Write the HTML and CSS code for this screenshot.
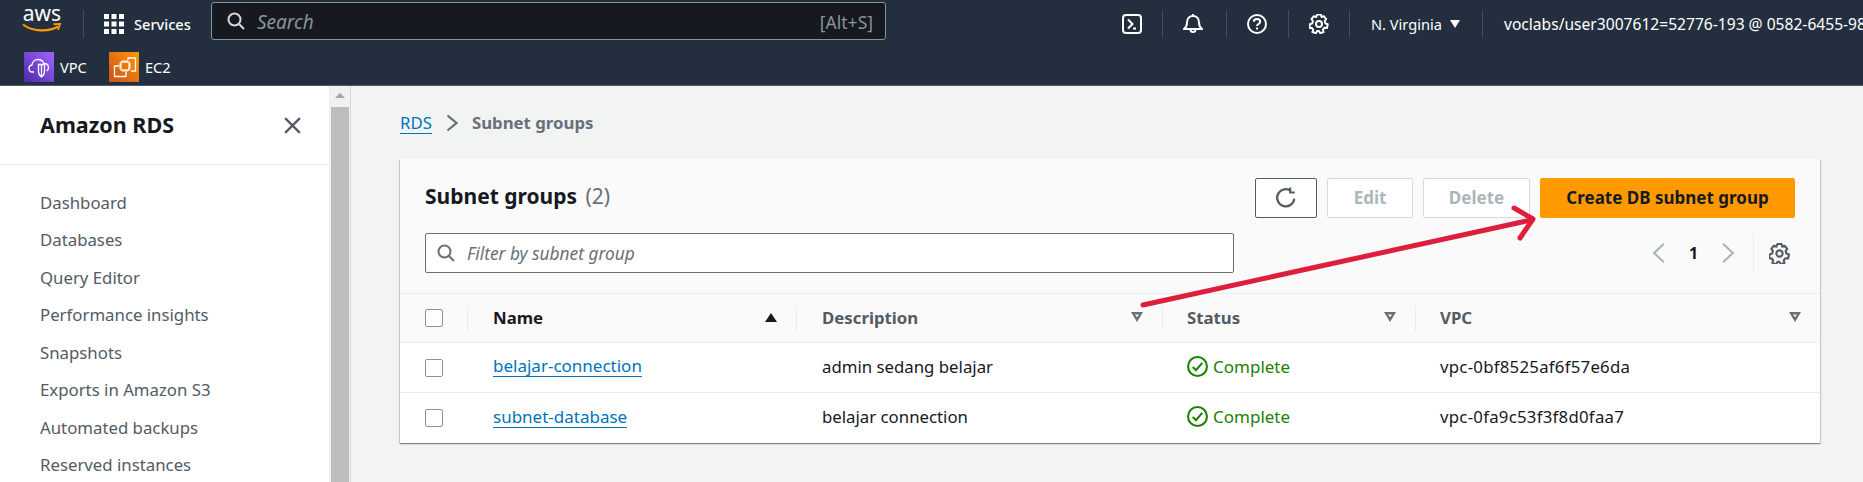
FILE: index.html
```html
<!DOCTYPE html>
<html lang="en">
<head>
    <meta charset="UTF-8">
    <meta name="viewport" content="width=device-width, initial-scale=1.0">
    <title>Subnet groups | RDS</title>
    <link rel="stylesheet" href="styles.css">
</head>
<body>

<header class="topnav">
    <div class="nav-row">
        <a class="aws-logo">
            <span class="aws-word">aws</span>
            <svg class="aws-smile" width="40" height="12" viewBox="0 0 40 12">
                <path d="M1 2.500C10 9.500 26 10.500 36 4.500" fill="none" stroke="#ff9900" stroke-width="2.200"/>
                <path d="M31.500 2.200L38 2L36 8" fill="none" stroke="#ff9900" stroke-width="1.800"/>
            </svg>
        </a>
        <span class="nav-sep sep-logo"></span>
        <svg class="grid-icon" width="20" height="20" viewBox="0 0 20 20" fill="#fff">
            <rect x="0" y="0" width="5" height="5"/><rect x="7.500" y="0" width="5" height="5"/><rect x="15" y="0" width="5" height="5"/>
            <rect x="0" y="7.500" width="5" height="5"/><rect x="7.500" y="7.500" width="5" height="5"/><rect x="15" y="7.500" width="5" height="5"/>
            <rect x="0" y="15" width="5" height="5"/><rect x="7.500" y="15" width="5" height="5"/><rect x="15" y="15" width="5" height="5"/>
        </svg>
        <span class="nav-services">Services</span>
        <div class="top-search">
            <svg width="18" height="18" viewBox="0 0 18 18" fill="none" stroke="#d5dbdb" stroke-width="2">
                <circle cx="7.500" cy="7.500" r="6"/><path d="M12 12l5 5"/>
            </svg>
            <span class="top-search-text">Search</span>
            <span class="top-search-key">[Alt+S]</span>
        </div>
        <svg class="nav-icon icon-terminal" width="20" height="20" viewBox="0 0 20 20" fill="none" stroke="#fff" stroke-width="2">
            <rect x="1" y="1" width="18" height="18" rx="3"/><path d="M6 5.500l4.500 4.500L6 14.500M11 14.500h3"/>
        </svg>
        <span class="nav-sep sep-terminal"></span>
        <svg class="nav-icon icon-bell" width="20" height="22" viewBox="0 0 20 22" fill="none" stroke="#fff" stroke-width="2">
            <path d="M1 16c2-1.500 3-3 3-6.500C4 5.500 6.500 3 10 3s6 2.500 6 6.500c0 3.500 1 5 3 6.500zM10 1v2M7.500 16.500a2.500 2.500 0 0 0 5 0"/>
        </svg>
        <span class="nav-sep sep-bell"></span>
        <svg class="nav-icon icon-help" width="20" height="20" viewBox="0 0 20 20" fill="none" stroke="#fff" stroke-width="2">
            <circle cx="10" cy="10" r="9"/><path d="M6.800 7.800C6.800 6 8.200 5 10 5s3.200 1 3.200 2.700c0 2.300-3.200 2.300-3.200 4.300"/><path d="M10 13.500V15.500"/>
        </svg>
        <span class="nav-sep sep-help"></span>
        <svg class="nav-icon icon-gear" width="20" height="20" viewBox="0 0 20 20" fill="none" stroke="#fff" stroke-width="2">
            <path d="M8 1h4l.6 2.600 2.300-1 2.500 3-1.500 2 .6 2.400 2.500 1-.8 3.800-2.700-.2-1.500 2 .8 2.400-3.600 1.200-1.200-2.200h-2l-1.200 2.200-3.600-1.200.8-2.400-1.500-2-2.700.2L.6 11l2.500-1 .6-2.400-1.500-2 2.500-3 2.300 1z" stroke-linejoin="round" transform="translate(0.300 -0.400) scale(0.97)"/>
            <circle cx="10" cy="10" r="3"/>
        </svg>
        <span class="nav-sep sep-gear"></span>
        <span class="nav-region">N. Virginia</span>
        <span class="region-caret"></span>
        <span class="nav-sep sep-region"></span>
        <span class="nav-user">voclabs/user3007612=52776-193 @ 0582-6455-9866</span>
    </div>
    <div class="nav-row shortcuts">
        <svg class="tile" width="30" height="30" viewBox="0 0 30 30">
            <defs>
                <linearGradient id="vpcGrad" x1="0" y1="1" x2="1" y2="0">
                    <stop offset="0" stop-color="#4d27a8"/><stop offset="1" stop-color="#a166ff"/>
                </linearGradient>
            </defs>
            <rect width="30" height="30" fill="url(#vpcGrad)"/>
            <path d="M10 20H8.500C6 20 5 18 5 16.500c0-2 1.300-3.300 3-3.500C8.200 9.500 11 7.500 14 7.500c3 0 5 1.800 6 4 2.500 0 4.500 1.500 4.500 4.200 0 1.300-.6 2.500-1.800 3.200" fill="none" stroke="#fff" stroke-width="1.300"/>
            <path d="M14.500 12.500h6v7c0 3-1.500 4.500-3 5.500-1.500-1-3-2.500-3-5.500z" fill="none" stroke="#fff" stroke-width="1.300"/>
            <path d="M17.500 13v11" stroke="#fff" stroke-width="1.300"/>
        </svg>
        <span class="shortcut-label">VPC</span>
        <svg class="tile tile-ec2" width="30" height="30" viewBox="0 0 30 30">
            <defs>
                <linearGradient id="ec2Grad" x1="0" y1="1" x2="1" y2="0">
                    <stop offset="0" stop-color="#c8511b"/><stop offset="1" stop-color="#ff9900"/>
                </linearGradient>
            </defs>
            <rect width="30" height="30" fill="url(#ec2Grad)"/>
            <path d="M10 14H5.500v10.500H17V20" fill="none" stroke="#fff" stroke-width="1.300"/>
            <path d="M19 8V6h7.500v13H22" fill="none" stroke="#fff" stroke-width="1.300"/>
            <rect x="12" y="10" width="8" height="8" fill="none" stroke="#fff" stroke-width="1.300"/>
            <path d="M14 8v2M16 8v2M18 8v2M14 18v2M16 18v2M18 18v2M10 12h2M10 14h2M10 16h2M20 12h2M20 14h2M20 16h2" stroke="#fff" stroke-width="1"/>
        </svg>
        <span class="shortcut-label">EC2</span>
    </div>
</header>

<div class="layout">
    <aside class="sidebar">
        <div class="sidebar-head">
            <span class="sidebar-title">Amazon RDS</span>
            <svg width="19" height="19" viewBox="0 0 18 18" stroke="#545b64" stroke-width="2.200" fill="none">
                <path d="M2 2l14 14M16 2L2 16"/>
            </svg>
        </div>
        <nav class="side-links">
            <a>Dashboard</a>
            <a>Databases</a>
            <a>Query Editor</a>
            <a>Performance insights</a>
            <a>Snapshots</a>
            <a>Exports in Amazon S3</a>
            <a>Automated backups</a>
            <a>Reserved instances</a>
        </nav>
    </aside>
    <div class="scrollbar">
        <div class="scroll-arrow"></div>
        <div class="scroll-thumb"></div>
    </div>

    <main class="content">
        <div class="breadcrumb">
            <a class="crumb-link">RDS</a>
            <svg width="12" height="18" viewBox="0 0 12 18" fill="none" stroke="#687078" stroke-width="2.200"><path d="M1.500 1.500l9 7.500-9 7.500"/></svg>
            <span class="crumb-current">Subnet groups</span>
        </div>

        <section class="card">
            <div class="card-head">
                <div class="head-row">
                    <h1 class="card-title">Subnet groups <span class="count">(2)</span></h1>
                    <div class="actions">
                        <button class="btn btn-refresh">
                            <svg width="22" height="22" viewBox="0 0 20 20" fill="none" stroke="#545b64" stroke-width="2"><path d="M17.500 10.500A7.800 7.800 0 1 1 13.500 3M13.800 .5v4.500H18"/></svg>
                        </button>
                        <button class="btn btn-edit" disabled>Edit</button>
                        <button class="btn btn-delete" disabled>Delete</button>
                        <button class="btn btn-primary">Create DB subnet group</button>
                    </div>
                </div>
                <div class="head-row filter-row">
                    <div class="filter">
                        <svg width="18" height="18" viewBox="0 0 18 18" fill="none" stroke="#687078" stroke-width="2"><circle cx="7.500" cy="7.500" r="6"/><path d="M12 12l5 5"/></svg>
                        <span>Filter by subnet group</span>
                    </div>
                    <div class="pager">
                        <svg width="13" height="22" viewBox="0 0 12 20" fill="none" stroke="#aab7b8" stroke-width="2"><path d="M11 1.500L2 10l9 8.500"/></svg>
                        <span class="page-num">1</span>
                        <svg width="13" height="22" viewBox="0 0 12 20" fill="none" stroke="#aab7b8" stroke-width="2"><path d="M1 1.500L10 10l-9 8.500"/></svg>
                        <span class="pager-sep"></span>
                        <svg width="21" height="21" viewBox="0 0 20 20" fill="none" stroke="#545b64" stroke-width="2">
                            <path d="M8 1h4l.6 2.600 2.300-1 2.500 3-1.500 2 .6 2.400 2.500 1-.8 3.800-2.700-.2-1.500 2 .8 2.400-3.600 1.200-1.200-2.200h-2l-1.200 2.200-3.600-1.200.8-2.400-1.500-2-2.700.2L.6 11l2.500-1 .6-2.400-1.500-2 2.500-3 2.300 1z" stroke-linejoin="round"/>
                            <circle cx="10" cy="10" r="3"/>
                        </svg>
                    </div>
                </div>
            </div>

            <div class="table">
                <div class="cell th cell-check"><span class="checkbox"></span></div>
                <div class="cell th th-active"><span class="th-inner">Name<span class="sort-up"></span></span></div>
                <div class="cell th"><span class="th-inner">Description<span class="sort-down"></span></span></div>
                <div class="cell th col-tight"><span class="th-inner">Status<span class="sort-down"></span></span></div>
                <div class="cell th col-tight"><span class="th-inner">VPC<span class="sort-down"></span></span></div>

                <div class="cell cell-check"><span class="checkbox"></span></div>
                <div class="cell"><a class="row-link">belajar-connection</a></div>
                <div class="cell">admin sedang belajar</div>
                <div class="cell status col-tight">
                    <svg width="21" height="21" viewBox="0 0 20 20" fill="none" stroke="#1d8102" stroke-width="2"><circle cx="10" cy="10" r="9"/><path d="M5.500 10.500l3 3 6-7"/></svg>
                    Complete
                </div>
                <div class="cell col-tight vpc-id">vpc-0bf8525af6f57e6da</div>

                <div class="cell cell-check"><span class="checkbox"></span></div>
                <div class="cell"><a class="row-link">subnet-database</a></div>
                <div class="cell">belajar connection</div>
                <div class="cell status col-tight">
                    <svg width="21" height="21" viewBox="0 0 20 20" fill="none" stroke="#1d8102" stroke-width="2"><circle cx="10" cy="10" r="9"/><path d="M5.500 10.500l3 3 6-7"/></svg>
                    Complete
                </div>
                <div class="cell col-tight vpc-id">vpc-0fa9c53f3f8d0faa7</div>
            </div>
        </section>
    </main>
</div>

<!-- red annotation arrow drawn over the page -->
<svg class="annotation" width="1863" height="482" viewBox="0 0 1863 482" fill="none" stroke="#dd1e3c" stroke-width="5" stroke-linecap="round" stroke-linejoin="round">
    <path d="M1143 305L1531 220"/>
    <path d="M1514 208L1533 219L1520 238"/>
</svg>

</body>
</html>
```

FILE: styles.css
```css
body {
    margin: 0;
    height: 482px;
    overflow: hidden;
    background-color: #f2f3f3;
    color: #16191f;
    font-family: "Noto Sans", "Open Sans", sans-serif;
    font-size: 16.8px;
}

.topnav {
    height: 85px;
    background-color: #232f3e;
    border-bottom: 1px solid #545b64;
    color: #fff;
    overflow: hidden;
    font-size: 14.6px;
}

.nav-row {
    display: flex;
    align-items: center;
    height: 47px;
    white-space: nowrap;
}

.aws-logo {
    display: flex;
    flex-direction: column;
    align-items: center;
    width: 40px;
    margin-left: 22px;
    flex: none;
}

.aws-word {
    font-size: 21px;
    line-height: 17px;
    margin-top: -9px;
}

.aws-smile {
    margin-top: 0;
}

.nav-sep {
    flex: none;
    width: 1px;
    height: 28px;
    background-color: #414d5c;
}

.sep-logo { margin-left: 21px; }
.grid-icon { margin-left: 20px; flex: none; }
.nav-services { margin-left: 10px; width: 56px; font-weight: 500; }

.top-search {
    box-sizing: border-box;
    flex: none;
    display: flex;
    align-items: center;
    width: 675px;
    height: 38px;
    margin-left: 21px;
    margin-top: -5px;
    padding: 0 12px 0 15px;
    background-color: #16191f;
    border: 1px solid #879596;
    border-radius: 3px;
}

.top-search-text {
    margin-left: 12px;
    margin-top: 2px;
    font-style: italic;
    font-size: 19px;
    color: #879596;
    flex: 1;
}

.top-search-key {
    margin-top: 1px;
    font-size: 17.5px;
    color: #879596;
}

.nav-icon { flex: none; }
.icon-terminal { margin-left: 236px; }
.sep-terminal { margin-left: 20px; }
.icon-bell { margin-left: 20px; }
.sep-bell { margin-left: 23px; }
.icon-help { margin-left: 20px; }
.sep-help { margin-left: 21px; }
.icon-gear { margin-left: 20px; }
.sep-gear { margin-left: 20px; }

.nav-region {
    margin-left: 21px;
    width: 70px;
}

.region-caret {
    flex: none;
    margin-left: 9px;
    width: 0;
    height: 0;
    border-left: 5px solid transparent;
    border-right: 5px solid transparent;
    border-top: 8px solid #fff;
}

.sep-region { margin-left: 22px; }
.nav-user { margin-left: 21px; font-size: 15.6px; }

.shortcuts {
    height: 30px;
    margin-top: 5px;
}

.tile { margin-left: 24px; flex: none; }
.tile-ec2 { margin-left: 22px; }
.shortcut-label { margin-left: 6px; width: 27px; }

.layout {
    display: flex;
    height: 396px;
}

.sidebar {
    flex: none;
    width: 330px;
    background-color: #fff;
    border-right: 1px solid #eaeded;
    box-sizing: border-box;
}

.sidebar-head {
    display: flex;
    align-items: center;
    justify-content: space-between;
    box-sizing: border-box;
    height: 79px;
    padding: 0 27px 0 40px;
    border-bottom: 1px solid #eaeded;
}

.sidebar-title {
    margin-top: -2px;
    font-size: 21.5px;
    font-weight: 700;
}

.side-links {
    display: flex;
    flex-direction: column;
    padding-top: 18.5px;
}

.side-links a {
    height: 37.5px;
    line-height: 37.5px;
    padding-left: 40px;
    color: #545b64;
}

.scrollbar {
    flex: none;
    display: flex;
    flex-direction: column;
    box-sizing: border-box;
    width: 21px;
    background-color: #f1f1f1;
    border-right: 1px solid #d5dbdb;
}

.scroll-arrow {
    height: 21px;
    position: relative;
}

/* little up arrow of the browser scrollbar */
.scroll-arrow::after {
    content: "";
    position: absolute;
    left: 5px;
    top: 7px;
    border-left: 5px solid transparent;
    border-right: 5px solid transparent;
    border-bottom: 5px solid #a3a3a3;
}

.scroll-thumb {
    flex: 1;
    margin: 0 1px;
    background-color: #bdbdbd;
}

.content {
    flex: 1;
    padding: 0 43px 0 49px;
}

.breadcrumb {
    display: flex;
    align-items: center;
    height: 73px;
}

.crumb-link {
    color: #0073bb;
    border-bottom: 1px solid #0073bb;
    line-height: 21px;
    margin-right: 14px;
}

.crumb-current {
    margin-left: 14px;
    font-weight: 700;
    color: #687078;
}

.card {
    background-color: #fff;
    box-shadow: 0 1px 1px 0 rgba(0, 28, 36, 0.3), 1px 1px 1px 0 rgba(0, 28, 36, 0.15), -1px 1px 1px 0 rgba(0, 28, 36, 0.15);
}

.card-head {
    box-sizing: border-box;
    height: 135px;
    padding: 19px 25px 0 25px;
    background-color: #fafafa;
    border-bottom: 1px solid #eaeded;
}

.head-row {
    display: flex;
    justify-content: space-between;
    align-items: center;
}

.card-title {
    margin: -4px 0 0;
    font-size: 21px;
    font-weight: 700;
}

.count {
    margin-left: 3px;
    font-weight: 400;
    color: #687078;
}

.actions {
    display: flex;
    gap: 10px;
}

.btn {
    box-sizing: border-box;
    height: 40px;
    padding: 0 0 2px;
    font-family: inherit;
    font-size: 17px;
    font-weight: 700;
    background-color: #fff;
    border-radius: 2px;
    border: 1px solid #d5dbdb;
    color: #aab7b8;
}

.btn-refresh {
    width: 62px;
    padding: 0;
    border-color: #545b64;
    display: flex;
    align-items: center;
    justify-content: center;
}

.btn-edit { width: 86px; }
.btn-delete { width: 107px; }

.btn-primary {
    width: 255px;
    background-color: #ff9900;
    border-color: #ff9900;
    color: #16191f;
}

.filter-row {
    margin-top: 15px;
}

.filter {
    box-sizing: border-box;
    display: flex;
    align-items: center;
    gap: 12px;
    width: 809px;
    height: 40px;
    padding-left: 11px;
    background-color: #fff;
    border: 1px solid #687078;
    border-radius: 2px;
    font-style: italic;
    font-size: 17.3px;
    color: #687078;
}

.pager {
    display: flex;
    align-items: center;
    height: 40px;
    margin-right: 5px;
}

.page-num {
    width: 57px;
    text-align: center;
    font-weight: 700;
    font-size: 16px;
}

.pager-sep {
    width: 1px;
    height: 40px;
    margin: 0 15px 0 18px;
    background-color: #eaeded;
}

.table {
    display: grid;
    grid-template-columns: 67px 329px 366px 253px 405px;
    grid-template-rows: 49px 50px 50px;
}

.cell {
    display: flex;
    align-items: center;
    box-sizing: border-box;
    padding-left: 26px;
    padding-bottom: 3px;
    border-bottom: 1px solid #eaeded;
}

.table > .cell:nth-last-child(-n+5) {
    border-bottom: none;
}

.col-tight {
    padding-left: 25px;
}

.cell-check {
    padding-left: 25px;
    padding-bottom: 0;
}

.th {
    background-color: #fafafa;
    padding-left: 0;
    padding-bottom: 0;
    font-weight: 700;
    color: #545b64;
}

.th.cell-check {
    padding-left: 25px;
}

.th-active { color: #16191f; }

.th-inner {
    flex: 1;
    display: flex;
    align-items: center;
    justify-content: space-between;
    box-sizing: border-box;
    height: 25px;
    padding: 0 19px 2px 25px;
    border-left: 1px solid #eaeded;
}

.col-tight .th-inner {
    padding-left: 24px;
}

.sort-up {
    width: 0;
    height: 0;
    border-left: 6px solid transparent;
    border-right: 6px solid transparent;
    border-bottom: 9px solid #16191f;
}

.sort-down {
    box-sizing: border-box;
    width: 12px;
    height: 10px;
    background-color: #687078;
    clip-path: polygon(0 0, 100% 0, 50% 100%, 0 0, 33% 25%, 50% 52%, 67% 25%, 33% 25%);
}

.checkbox {
    box-sizing: border-box;
    width: 18px;
    height: 18px;
    background-color: #fff;
    border: 1px solid #879596;
    border-radius: 2px;
}

.row-link {
    color: #0073bb;
    border-bottom: 1px solid #0073bb;
    line-height: 21px;
    font-size: 17px;
}

.status {
    color: #1d8102;
    gap: 5px;
    font-size: 17px;
}

.vpc-id {
    letter-spacing: 0.25px;
}

.annotation {
    position: absolute;
    left: 0;
    top: 0;
    pointer-events: none;
}
```
